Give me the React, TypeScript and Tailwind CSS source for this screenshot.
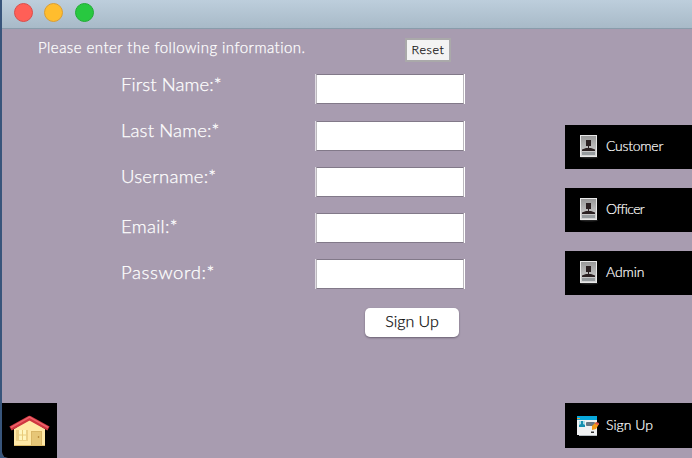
const fields = [
  { label: 'First Name:*', row: 'mb-[17px]', style: 'tracking-[0.1px] pb-[11px]' },
  { label: 'Last Name:*', row: 'mb-4', style: 'tracking-[0.15px] pb-[13px]' },
  { label: 'Username:*', row: 'mb-4', style: 'tracking-[0.25px] pb-[13px]' },
  { label: 'Email:*', row: 'mb-4', style: 'tracking-[0.3px] pb-[5px]' },
  { label: 'Password:*', row: 'mb-[19px]', style: 'tracking-[0.6px] pb-[5px]' },
];

const roles = [
  { label: 'Customer', style: 'tracking-[-0.25px]' },
  { label: 'Officer', style: 'tracking-[-0.6px]' },
  { label: 'Admin', style: 'tracking-[-0.1px]' },
];

function PersonIcon() {
  return (
    <svg width="22" height="26" viewBox="0 0 22 26" className="shrink-0">
      <defs>
        <linearGradient id="photo" x1="0" y1="0" x2="0" y2="1">
          <stop offset="0" stopColor="#999999" />
          <stop offset="1" stopColor="#d5d5d5" />
        </linearGradient>
      </defs>
      <ellipse cx="11" cy="23.500" rx="9" ry="1" fill="#242424" />
      <rect x="2" y="1" width="17" height="22" fill="#e8e8e8" />
      <rect x="3" y="2" width="15" height="20" fill="url(#photo)" />
      <rect x="4" y="18" width="13" height="3" fill="#969b9e" />
      <path d="M8 6h5v6h-2v2h2l4 1.500V17H4v-1.500L8 14h2v-2H8z" fill="#2a2021" />
    </svg>
  );
}

function FormIcon() {
  return (
    <svg width="24" height="22" viewBox="0 0 24 22" className="shrink-0">
      <path d="M1 3h20v18H3v-1H1z" fill="#f0f1f2" />
      <path d="M3 20h18v1H3z" fill="#b5bcc0" />
      <rect x="1" y="1" width="20" height="4" fill="#08a8dc" />
      <rect x="1" y="3" width="3" height="1" fill="#ee9a35" />
      <rect x="3" y="6" width="6" height="6" fill="#a5dce8" />
      <path d="M5 6h2v3l2 1v2H3v-2l2-1z" fill="#168faf" />
      <rect x="10" y="7" width="9" height="4" rx="1" fill="#667784" />
      <path d="M20 7l3 2-3 5-4 1v-4z" fill="#f39b18" />
      <path d="M20 7l3 1v2l-4-1z" fill="#d94d48" />
      <rect x="15" y="16.500" width="3" height="1.500" fill="#303030" />
    </svg>
  );
}

function HomeIcon() {
  return (
    <svg width="43" height="34" viewBox="0 0 43 34">
      <path d="M6 15L21.500 5 37 15V32H6z" fill="#ffe8a6" />
      <path d="M6 31h31v1H6z" fill="#dfbd69" />
      <path d="M2.500 14.500L21.500 4 40.500 14.500" fill="none" stroke="#cf3640" strokeWidth="4.500" strokeLinejoin="round" />
      <path d="M3 13.500L21.500 3 40 13.500" fill="none" stroke="#ee626a" strokeWidth="1.500" />
      <rect x="8" y="16" width="12" height="11" fill="#ecd087" />
      <rect x="11" y="16" width="7" height="10" fill="#fff5bd" />
      <path d="M14.500 16v10M11 21h7" stroke="#e9cc7b" />
      <rect x="23" y="17" width="11" height="14" fill="#d9b665" />
      <rect x="24" y="18" width="9" height="13" fill="#e6c677" />
      <circle cx="30.500" cy="23" r="0.800" fill="#a97424" />
    </svg>
  );
}

export default function App() {
  return (
    <div className="h-[458px] w-[692px] overflow-hidden bg-[#38557b] pl-[2px] font-[Lato,sans-serif]">
      <div className="flex h-[458px] w-[690px] flex-col overflow-hidden rounded-bl-[6px] bg-[#a89cb0]">
        <header className="flex h-[29px] shrink-0 items-start gap-[11.500px] border-b border-[#899cab] bg-linear-to-b from-[#bdcedc] to-[#a8bac8] pt-[3px] pl-[11.500px]">
          <span className="size-[19px] rounded-full border border-[#dc4d49] bg-[#ff5f57]" />
          <span className="size-[19px] rounded-full border border-[#dc9e30] bg-[#ffbd2e]" />
          <span className="size-[19px] rounded-full border border-[#22ac36] bg-[#28c840]" />
        </header>
        <div className="flex min-h-0 flex-1">
          <main className="flex w-[563px] flex-col">
            <div className="flex h-[45px] items-start pl-[36px]">
              <p className="w-[367px] shrink-0 pt-[8px] text-[15px] leading-5 font-light tracking-[0.47px] text-white [-webkit-text-stroke:0.25px_white]">Please enter the following information.</p>
              <button className="mt-[9px] h-[24px] w-[46px] border-2 border-[#aaa9aa] bg-[#f3f3f3] text-[12.500px] leading-[18px] font-light tracking-[0.6px] text-[#111] [-webkit-text-stroke:0.25px_#111]">Reset</button>
            </div>
            <form className="flex flex-col pl-[119px]">
              {fields.map((field) => (
                <label key={field.label} className={`flex h-[30px] items-center ${field.row}`}>
                  <span className={`w-[194px] text-[18.500px] leading-7 font-light text-white [-webkit-text-stroke:0.25px_white] ${field.style}`}>{field.label}</span>
                  <span className="flex h-[30px] w-[150px] border-r border-l border-r-white border-l-[#e0dce3]">
                    <input className="w-full border border-x-[#bcb9be] border-y-[#827989] bg-white" />
                  </span>
                </label>
              ))}
              <button type="button" className="ml-[244px] h-[29px] w-[94px] rounded-[5px] bg-white pb-[3px] text-base leading-5 font-light text-[#111] shadow-[0_1px_2px_#6b6173] [-webkit-text-stroke:0.25px_#111]">Sign Up</button>
            </form>
            <div className="mt-auto flex h-[55px] w-[55px] items-center justify-center bg-black">
              <HomeIcon />
            </div>
          </main>
          <aside className="flex flex-1 flex-col pt-[96px] pb-[10px]">
            <div className="flex flex-col gap-[19px]">
              {roles.map((role) => (
                <button key={role.label} className="flex h-[44px] items-center bg-black pl-[13px] text-sm font-light text-white [-webkit-text-stroke:0.2px_white]">
                  <PersonIcon />
                  <span className={`ml-[6px] pb-[2px] ${role.style}`}>{role.label}</span>
                </button>
              ))}
            </div>
            <button className="mt-auto flex h-[45px] items-center bg-black pl-[11px] text-sm font-light text-white [-webkit-text-stroke:0.2px_white]">
              <FormIcon />
              <span className="ml-[6px] pb-[2px]">Sign Up</span>
            </button>
          </aside>
        </div>
      </div>
    </div>
  );
}
